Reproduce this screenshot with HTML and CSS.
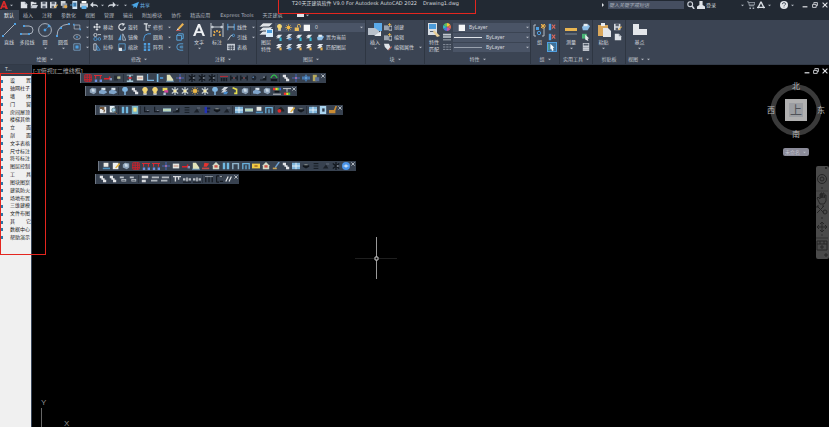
FILE: index.html
```html
<!DOCTYPE html>
<html lang="zh-CN">
<head>
<meta charset="utf-8">
<title>T20天正建筑软件</title>
<link rel="stylesheet" href="styles.css">
</head>
<body>
<svg class="sprite" aria-hidden="true">
  <!-- generic marks -->
  <symbol id="car" viewBox="0 0 4 4"><path d="M0 1h4L2 3z" fill="#b4bac3"/></symbol>
  <symbol id="new" viewBox="0 0 10 10"><path d="M1 1h5l3 3v5H1z" fill="#dfe3e8"/><path d="M6 1v3h3" fill="#8a929e"/></symbol>
  <symbol id="open" viewBox="0 0 10 10"><path d="M1 1h3l1 1h3v2H3L1 9z" fill="#dfe3e8"/><path d="M3 5h7L8 9H1z" fill="#c9ced6"/></symbol>
  <symbol id="save" viewBox="0 0 10 10"><path d="M1 1h8v8H1z" fill="#d3d8df"/><path d="M3 1h4v3H3zM3 6h4v3H3z" fill="#59626f"/></symbol>
  <symbol id="saveas" viewBox="0 0 10 10"><path d="M0 1h8v8H0z" fill="#d3d8df"/><path d="M2 1h4v3H2zM2 6h3v3H2z" fill="#59626f"/><path d="M5 8l4-4 1 1-4 4z" fill="#e9b355"/></symbol>
  <symbol id="phone" viewBox="0 0 10 10"><path d="M3 0h6v10H3z" fill="#d3e6f5"/><path d="M4 2h4v5H4z" fill="#3f79a8"/><path d="M0 5h5M3 3l2 2-2 2" stroke="#54a9e8" fill="none"/></symbol>
  <symbol id="cloud" viewBox="0 0 10 10"><path d="M1 0h6v6H1z" fill="#cfd4da"/><path d="M3 3h6v6H3z" fill="#8f98a4"/><circle cx="7" cy="7" r="2" fill="#e1a94b"/></symbol>
  <symbol id="print" viewBox="0 0 10 10"><path d="M2 0h6v3H2z" fill="#fff"/><path d="M0 3h10v5H0z" fill="#c6ccd4"/><path d="M2 6h6v4H2z" fill="#5eb1ea"/></symbol>
  <symbol id="undo" viewBox="0 0 10 10"><path d="M4 1L0 5l4 3V6h3q2 0 3 2Q10 4 6 4H4z" fill="#d5dae1"/></symbol>
  <symbol id="redo" viewBox="0 0 10 10"><path d="M6 1l4 4-4 3V6H3Q1 6 0 8 0 4 4 4h2z" fill="#d5dae1"/></symbol>
  <symbol id="plane" viewBox="0 0 10 10"><path d="M0 5l10-4-3 8-2-2-2 2V6z" fill="#4ba6e6"/></symbol>
  <symbol id="logo" viewBox="0 0 10 10"><path d="M4 0h2l4 10H7L6 8H3L2 10H0zM5 3L4 6h2z" fill="#d92b2b"/></symbol>
  <symbol id="find" viewBox="0 0 10 10"><circle cx="4" cy="4" r="3" fill="none" stroke="#cfd4dc" stroke-width="1.4"/><path d="M6 6l3 4" stroke="#cfd4dc" stroke-width="2"/></symbol>
  <symbol id="user" viewBox="0 0 10 10"><path d="M3 0h4v5l3 2v3H0V7l3-2z" fill="#dfe3e8"/></symbol>
  <symbol id="cart" viewBox="0 0 10 10"><path d="M0 1h2l1 5h6M2 2h8L9 5H3" fill="none" stroke="#a6adb8"/><path d="M3 8h2v2H3zM7 8h2v2H7z" fill="#a6adb8"/></symbol>
  <symbol id="app" viewBox="0 0 10 10"><path d="M5 1L1 9M5 1l4 8M0 8h10" fill="none" stroke="#d8dde3" stroke-width="1.8"/></symbol>
  <symbol id="help" viewBox="0 0 10 10"><circle cx="5" cy="5" r="5" fill="#e3e6ea"/><path d="M3 4q0-2 2-2t2 2L5 6M5 7v1" fill="none" stroke="#4b5462" stroke-width="1.2"/></symbol>
  <symbol id="min" viewBox="0 0 10 10"><path d="M1 7h8v2H1z" fill="#e1e4e8"/></symbol>
  <symbol id="max" viewBox="0 0 10 10"><path d="M3 3V1h6v5H7M1 4h6v5H1z" fill="none" stroke="#e1e4e8" stroke-width="1.4"/></symbol>
  <symbol id="cls" viewBox="0 0 10 10"><path d="M1 1l8 8M9 1L1 9" stroke="#e1e4e8" stroke-width="1.8"/></symbol>
  <!-- large ribbon icons -->
  <symbol id="line" viewBox="0 0 14 14"><path d="M1 13L13 1" stroke="#a9b1bd"/><path d="M0 12h2v2H0zM12 0h2v2h-2z" fill="#4f9fe0"/></symbol>
  <symbol id="pline" viewBox="0 0 14 14"><path d="M0 11h9q4 0 4-4T9 3H4" fill="none" stroke="#a9b1bd"/><path d="M0 10h2v2H0zM8 10h2v2H8zM3 2h2v2H3z" fill="#4f9fe0"/></symbol>
  <symbol id="circ" viewBox="0 0 14 14"><circle cx="7" cy="7" r="6.4" fill="none" stroke="#a9b1bd"/><path d="M7 7l4-4M6 6h2v2H6zM10 2h2v2h-2z" fill="#4f9fe0" stroke="#4f9fe0" stroke-width=".5"/></symbol>
  <symbol id="arc" viewBox="0 0 14 14"><path d="M1 13Q1 2 13 1" fill="none" stroke="#a9b1bd"/><path d="M0 12h2v2H0zM4 4h2v2H4zM12 0h2v2h-2z" fill="#4f9fe0"/></symbol>
  <symbol id="txt" viewBox="0 0 14 14"><path d="M6 1h2l5 12h-2.4L9.4 10H4.6l-1.200 3H1zM7 4L5.300 8.300h3.400z" fill="#eceff2"/></symbol>
  <symbol id="dimen" viewBox="0 0 14 14"><path d="M1 0v14M13 0v14M1 4h12M1 4l2-1v2zM13 4l-2-1v2z" fill="#c4cad2" stroke="#c4cad2"/><path d="M7 7v2M4 8l1 2M10 8l-1 2M3 12h2M9 12h2" stroke="#edb04b" stroke-width="1.500"/></symbol>
  <symbol id="layers" viewBox="0 0 14 14"><path d="M4 0h10l-4 4H0zM4 4h10l-4 4H0zM4 8h8l-3 4H0z" fill="#e0e4e8" stroke="#3b4453" stroke-width=".6"/><path d="M7 6h7v8H7z" fill="#d7ebfa"/><path d="M8 7h5v3H8z" fill="#4c9ddc"/></symbol>
  <symbol id="insert" viewBox="0 0 14 14"><path d="M6 0h8v8H6z" fill="#5aa9e8"/><path d="M0 5h7l4 3v4H0z" fill="#b9c1cb"/><path d="M6 13l7-5v5z" fill="#e5e8ec"/></symbol>
  <symbol id="match" viewBox="0 0 14 14"><path d="M1 0h9v12H1z" fill="#d9dee4"/><path d="M2 1h7v5H2z" fill="#4b9bdb"/><path d="M3 8h5v1H3z" fill="#5a6473"/><path d="M7 7l6 6-3 1-4-5z" fill="#e9cf98"/></symbol>
  <symbol id="group" viewBox="0 0 14 14"><path d="M3 2H1v11h2M11 5v8h-2" fill="none" stroke="#b3bac4"/><path d="M3 4h3v3H3z" fill="#4f9fe0"/><circle cx="6" cy="10" r="1.700" fill="none" stroke="#4f9fe0"/><path d="M10 1v5M8 3h5M8 1l4 4M12 1L8 5" stroke="#edb04b" stroke-width="1"/></symbol>
  <symbol id="measure" viewBox="0 0 14 14"><path d="M1 5h12v3H1z" fill="#e8b552"/><path d="M1 11h12" stroke="#7d8693"/></symbol>
  <symbol id="paste" viewBox="0 0 14 14"><path d="M1 2h10v11H1z" fill="#d9a75c"/><path d="M4 0h4v3H4z" fill="#e8ebee"/><path d="M6 5h5l3 3v6H6z" fill="#e3e6ea"/></symbol>
  <symbol id="base" viewBox="0 0 14 14"><path d="M0 1h6v5h8v6H0z" fill="#e3e6ea"/></symbol>
  <!-- small ribbon icons -->
  <symbol id="rect" viewBox="0 0 10 10"><path d="M1.500 2.500h7v5h-7z" fill="none" stroke="#a9b1bd"/><path d="M0 1h2v2H0zM8 7h2v2H8z" fill="#4f9fe0"/></symbol>
  <symbol id="elli" viewBox="0 0 10 10"><ellipse cx="5" cy="5" rx="4.300" ry="3" fill="none" stroke="#a9b1bd"/><path d="M4 4h2v2H4z" fill="#4f9fe0"/></symbol>
  <symbol id="hatch" viewBox="0 0 10 10"><path d="M1 1h8v8H1z" fill="none" stroke="#7fa8cc"/><path d="M3 3h4v4H3z" fill="#4f9fe0"/></symbol>
  <symbol id="move" viewBox="0 0 10 10"><path d="M5 0l2 2.500H3zM5 10L3 7.500h4zM0 5l2.500-2v4zM10 5L7.500 3v4zM4.400 2h1.200v6H4.400zM2 4.400h6v1.200H2z" fill="#dde1e6"/></symbol>
  <symbol id="rot" viewBox="0 0 10 10"><path d="M6 1a4 4 0 1 0 3 4" fill="none" stroke="#dde1e6" stroke-width="1.400"/><path d="M5 0l4 1-3 3z" fill="#dde1e6"/></symbol>
  <symbol id="trim" viewBox="0 0 10 10"><path d="M1 1h5M4 1v8h3" fill="none" stroke="#dde1e6" stroke-width="1.500"/><path d="M6 3h4M6 5h3" stroke="#dde1e6"/></symbol>
  <symbol id="pen" viewBox="0 0 10 10"><path d="M2 7l6-7 2 2-6 6z" fill="#eab352"/><path d="M0 9h6v1H0z" fill="#d95f54"/><path d="M2 7l2 1-3 1z" fill="#fff"/></symbol>
  <symbol id="copy" viewBox="0 0 10 10"><circle cx="3" cy="2.500" r="2" fill="none" stroke="#dde1e6"/><circle cx="3" cy="7.500" r="2" fill="none" stroke="#4f9fe0"/><circle cx="8" cy="7.500" r="1.700" fill="none" stroke="#4f9fe0"/><path d="M6 2h4" stroke="#dde1e6"/></symbol>
  <symbol id="mirror" viewBox="0 0 10 10"><path d="M4 1v8H0z" fill="#4f9fe0"/><path d="M6 1v8h4z" fill="none" stroke="#b9c5d2"/></symbol>
  <symbol id="fillet" viewBox="0 0 10 10"><path d="M1 10V7q0-5 5-6h4" fill="none" stroke="#4f9fe0" stroke-width="1.200"/></symbol>
  <symbol id="cube" viewBox="0 0 10 10"><path d="M1 3h6v6H1zM3 1h6v6H7M1 3l2-2" fill="none" stroke="#5aa6dd" stroke-width="1.200"/></symbol>
  <symbol id="stretch" viewBox="0 0 10 10"><path d="M1 1h3v8H1z" fill="none" stroke="#dde1e6"/><path d="M5 3l4 6H5z" fill="none" stroke="#4f9fe0"/></symbol>
  <symbol id="scale" viewBox="0 0 10 10"><path d="M1 1h8v8H1z" fill="none" stroke="#5aa6dd"/><path d="M1 6h4v4H1z" fill="#dde1e6"/></symbol>
  <symbol id="array" viewBox="0 0 10 10"><path d="M1 0h3v3H1zM6 0h3v3H6zM1 4h3v2H1zM6 4h3v2H6zM1 7h3v3H1zM6 7h3v3H6z" fill="#4f9fe0"/></symbol>
  <symbol id="offset" viewBox="0 0 10 10"><path d="M9 1H5a4 4 0 0 0 0 8h4M9 4H6a1 1 0 0 0 0 2h3" fill="none" stroke="#5aa6dd" stroke-width="1.100"/></symbol>
  <symbol id="lin" viewBox="0 0 10 10"><path d="M1 1v8M9 1v8" stroke="#4f9fe0" stroke-width="1.300"/><path d="M1 5h8" stroke="#dde1e6"/></symbol>
  <symbol id="lead" viewBox="0 0 10 10"><path d="M1 9l4-6h2" fill="none" stroke="#dde1e6"/><circle cx="8" cy="3" r="1.500" fill="none" stroke="#4f9fe0"/></symbol>
  <symbol id="table" viewBox="0 0 10 10"><path d="M0 1h10v8H0z" fill="#c4cad2"/><path d="M1 4h8M1 6.500h8M4 3v6M7 3v6" stroke="#3b4453"/></symbol>
  <symbol id="bulb" viewBox="0 0 10 10"><path d="M5 0a3.300 3.300 0 0 1 2 6v3H3V6a3.300 3.300 0 0 1 2-6z" fill="#f3d673"/><path d="M3 8h4v2H3z" fill="#b8bdc4"/></symbol>
  <symbol id="sun" viewBox="0 0 10 10"><circle cx="5" cy="5" r="2.600" fill="#efb947"/><path d="M5 0v10M0 5h10M1.500 1.500l7 7M8.500 1.500l-7 7" stroke="#efb947" stroke-width=".8"/></symbol>
  <symbol id="lock" viewBox="0 0 10 10"><path d="M1 5h6v5H1z" fill="#eec05b"/><path d="M5 5V2q0-1.500 2-1.500t2 2V5" fill="none" stroke="#eec05b" stroke-width="1.300"/></symbol>
  <symbol id="sq" viewBox="0 0 10 10"><path d="M1 1h9v9H1z" fill="#f6f7f8"/></symbol>
  <symbol id="lay1" viewBox="0 0 10 10"><path d="M3 1h6L6 4H0zM3 4h4L5 6H0z" fill="#e1e5ea"/><path d="M5 5h3v5H5z" fill="#35b9d8"/></symbol>
  <symbol id="lay2" viewBox="0 0 10 10"><path d="M4 0h5L5 4H0zM3 4h5L5 7H0z" fill="#cdd4dc"/><path d="M4 6h5L7 9H3z" fill="#4b8fd0"/></symbol>
  <symbol id="lay3" viewBox="0 0 10 10"><path d="M3 0h6L6 3H0zM3 3h5L5 6H0z" fill="#e1e5ea"/><path d="M5 5h3v4H5z" fill="#e9b24d"/></symbol>
  <symbol id="lay4" viewBox="0 0 10 10"><path d="M3 2h5l2 2-3 5H1L0 5z" fill="#8cbde6"/><path d="M2 1h5v3H2z" fill="#e7edf2"/></symbol>
  <symbol id="blk" viewBox="0 0 10 10"><path d="M0 3h5v6H0z" fill="#9aa3af"/><path d="M6 4h4v5H6z" fill="none" stroke="#dde1e6"/><path d="M7 0v4M5 2h4" stroke="#efb947"/></symbol>
  <symbol id="attr" viewBox="0 0 10 10"><path d="M0 1h6l2 4-3 4-4-4z" fill="#dfe3e8"/><path d="M5 9l4-5 1 1-4 4z" fill="#d9705d"/></symbol>
  <symbol id="wheel" viewBox="0 0 10 10"><path d="M5 5V0a5 5 0 0 1 4.300 2.500z" fill="#f0c23e"/><path d="M5 5l4.300-2.500a5 5 0 0 1 0 5z" fill="#e06b4b"/><path d="M5 5l4.300 2.500A5 5 0 0 1 5 10z" fill="#c755a8"/><path d="M5 5v5A5 5 0 0 1 .7 7.500z" fill="#4f74dd"/><path d="M5 5L.7 7.500a5 5 0 0 1 0-5z" fill="#36b7c4"/><path d="M5 5L.7 2.500A5 5 0 0 1 5 0z" fill="#5fc25f"/></symbol>
  <symbol id="lines" viewBox="0 0 10 10"><path d="M0 1h10v2H0zM0 4h10v2H0zM0 8h10v1H0z" fill="#c4cad2"/></symbol>
  <symbol id="ltype" viewBox="0 0 10 10"><path d="M0 2h10M0 5h10M0 8h10" stroke="#9aa2ae" stroke-dasharray="3 1"/></symbol>
  <symbol id="g1" viewBox="0 0 10 10"><path d="M1 1h3v8H1z" fill="#4f9fe0"/><path d="M5 2l4 5M9 2L5 7" stroke="#d8665c" stroke-width="1.300"/></symbol>
  <symbol id="g2" viewBox="0 0 10 10"><path d="M0 0h10v10H0z" fill="#3f7098"/><path d="M3 1l5 5H6l1 3-2 1-1-3-1 1z" fill="#fff"/><path d="M1 1v8" stroke="#55c488"/></symbol>
  <symbol id="calc" viewBox="0 0 10 10"><path d="M1 0h8v10H1z" fill="#c9ced6"/><path d="M2 1h6v2H2zM2 5h1v1H2zM4.500 5h1v1h-1zM7 5h1v1H7zM2 8h1v1H2zM4.500 8h1v1h-1zM7 8h1v1H7z" fill="#505a68"/></symbol>
  <symbol id="pick" viewBox="0 0 10 10"><path d="M0 1h6v6H0z" fill="#48b474"/><path d="M4 2l5 5H7l1 3-2-1-2-1z" fill="#e7eaed"/></symbol>
  <!-- floating toolbar icons -->
  <symbol id="grid" viewBox="0 0 10 10"><path d="M1 1h8v8H1zM4 0v10M7 0v10M0 4h10M0 7h10" fill="none" stroke="#c9222c" stroke-width="1.200"/></symbol>
  <symbol id="axis" viewBox="0 0 10 10"><path d="M0 2h10M2 2v4M8 2v4" stroke="#d92b35" stroke-width="1.300"/><path d="M1 7h3v3H1zM7 7h3v3H7z" fill="#6c8fe0"/></symbol>
  <symbol id="red" viewBox="0 0 10 10"><path d="M0 6h7V3" fill="none" stroke="#e01f28" stroke-width="1.800"/><path d="M7 5h3v3H7z" fill="#8292b8"/></symbol>
  <symbol id="blob" viewBox="0 0 10 10"><path d="M1 3l3-2 5 1v5L6 9 1 7z" fill="#8fa5bc"/><path d="M3 2l4 1v3H4z" fill="#c9d8e5"/></symbol>
  <symbol id="blob2" viewBox="0 0 10 10"><path d="M3 1h5v3H3z" fill="#dbe4ec"/><path d="M0 5l4-2 5 2 1 2-4 2-6-1z" fill="#7fa4ca"/></symbol>
  <symbol id="dark" viewBox="0 0 10 10"><path d="M1 8l4-5 3 5z" fill="#1b2129"/><path d="M5 2h4v1H5z" fill="#707986"/></symbol>
  <symbol id="hook" viewBox="0 0 10 10"><path d="M2 1v6h6" fill="none" stroke="#161b22" stroke-width="1.500"/><path d="M5 5h2v1H5z" fill="#88919c"/></symbol>
  <symbol id="box" viewBox="0 0 10 10"><path d="M0 7h3l5-5v6H0z" fill="#141a20"/><path d="M4 3h2v2H4z" fill="#79828e"/></symbol>
  <symbol id="anvil" viewBox="0 0 10 10"><path d="M1 4h8v2L5 8 1 6z" fill="#12171d"/><path d="M3 3h4v1H3z" fill="#a3a79f"/></symbol>
  <symbol id="drop" viewBox="0 0 10 10"><circle cx="5" cy="5" r="3" fill="#1d2530"/><path d="M3 3h2v2H3z" fill="#5477a0"/></symbol>
  <symbol id="key" viewBox="0 0 10 10"><path d="M0 2h5v6H0z" fill="#242b34"/><path d="M4 3h4v3H4z" fill="#b9bd8f"/></symbol>
  <symbol id="beam" viewBox="0 0 10 10"><path d="M1 1h8v1H1zM1 8h8v2H1zM4 2h2v6H4z" fill="#a6c9d8"/><path d="M3 5h4" stroke="#d9222c" stroke-width="2"/></symbol>
  <symbol id="win" viewBox="0 0 10 10"><path d="M1 2h8v6H1z" fill="#e4e6e0"/><path d="M2 5h6" stroke="#bd6d59"/></symbol>
  <symbol id="corner" viewBox="0 0 10 10"><path d="M2 0v8h8" fill="none" stroke="#79b5df" stroke-width="1.400"/></symbol>
  <symbol id="flag" viewBox="0 0 10 10"><path d="M2 0v10" stroke="#7bc3eb" stroke-width="2"/><path d="M5 5h4" stroke="#4f9fe0" stroke-width="2"/></symbol>
  <symbol id="stair" viewBox="0 0 10 10"><path d="M1 1h4l4 6v2H1z" fill="#e2e3b9"/><path d="M0 9h10" stroke="#6aa4d0"/></symbol>
  <symbol id="cross" viewBox="0 0 10 10"><path d="M5 0v10M0 5h10" stroke="#4665b8" stroke-width="1.300"/><path d="M4 4h2v2H4z" fill="#e07aa0"/></symbol>
  <symbol id="star" viewBox="0 0 10 10"><path d="M5 0v10M1 2l8 6M9 2L1 8" stroke="#10151b" stroke-width="1.500"/><path d="M6 4h2v2H6z" fill="#858e99"/></symbol>
  <symbol id="snow" viewBox="0 0 10 10"><path d="M5 0v10M1 2l8 6M9 2L1 8" stroke="#c3cdd2" stroke-width="1.500"/><circle cx="5" cy="5" r="2" fill="#f4e9a7"/></symbol>
  <symbol id="dots" viewBox="0 0 10 10"><path d="M0 3h10" stroke="#d9222c"/><path d="M1 5h2v4H1zM4 5h2v4H4zM7 5h2v4H7z" fill="#151b23"/></symbol>
  <symbol id="arr" viewBox="0 0 10 10"><path d="M1 5h8M1 2v6M9 2v6" stroke="#141a22" stroke-width="1.600"/><path d="M4 4h2v2H4z" fill="#94585b"/></symbol>
  <symbol id="green" viewBox="0 0 10 10"><path d="M1 5q4-8 8 0" fill="none" stroke="#2fc347" stroke-width="1.500"/><path d="M1 6h8v3H1z" fill="#11171d"/></symbol>
  <symbol id="steps" viewBox="0 0 10 10"><path d="M1 1h4v3H1zM3 4h4v2H3zM5 6h4v3H5z" fill="#e2e4e7"/></symbol>
  <symbol id="steps2" viewBox="0 0 10 10"><path d="M1 2h5v2H1zM3 5h6v3H3z" fill="#b9bfc6"/><path d="M4 6h4v1H4z" fill="#39424f"/></symbol>
  <symbol id="pan" viewBox="0 0 10 10"><path d="M5 0l2 3h3v4H7l-2 3-2-3H0V3h3z" fill="#4477ad"/><path d="M4 4h2v2H4z" fill="#7fb0dc"/></symbol>
  <symbol id="olive" viewBox="0 0 10 10"><path d="M1 1h5v8H1z" fill="#b7a95b"/><path d="M4 4h5v5H4z" fill="#596e93"/></symbol>
  <symbol id="mag" viewBox="0 0 10 10"><path d="M2 1h6v4H2z" fill="#ecd95a"/><path d="M4 4h5v3H4z" fill="#cf3f9a"/><path d="M3 7h3v3H3z" fill="#b7c6d4"/></symbol>
  <symbol id="hookY" viewBox="0 0 10 10"><path d="M2 1l5 2v5H4" fill="none" stroke="#e6de4c" stroke-width="2"/></symbol>
  <symbol id="pin" viewBox="0 0 10 10"><path d="M5 0a3 3 0 0 1 1 6v4H4V6a3 3 0 0 1 1-6z" fill="#7fb6e3"/></symbol>
  <symbol id="bars" viewBox="0 0 10 10"><path d="M1 1h3v8H1zM6 1h3v8H6z" fill="#71b9e2"/></symbol>
  <symbol id="pane" viewBox="0 0 10 10"><path d="M0 1h10v8H0z" fill="#80b6dc"/><path d="M5 1v8M0 5h10" stroke="#f4f7f8"/></symbol>
  <symbol id="green2" viewBox="0 0 10 10"><path d="M1 0h8v10H1z" fill="#77b5cb"/><path d="M3 2h4v5H3z" fill="#efe68b"/></symbol>
  <symbol id="cell" viewBox="0 0 10 10"><path d="M1 0h8v10H1z" fill="#a9d3ee"/><path d="M4 3h3v4H4z" fill="#2c3a49"/></symbol>
  <symbol id="rainb" viewBox="0 0 10 10"><path d="M0 1h3v3H0z" fill="#e33"/><path d="M3 1h3v3H3z" fill="#eadc2a"/><path d="M6 1h2v3H6z" fill="#3bc450"/><path d="M8 1h2v3H8z" fill="#3f67e0"/><path d="M2 5h6v2H2z" fill="#12171d"/><path d="M0 9h10" stroke="#e8e8e8"/></symbol>
  <symbol id="rainc" viewBox="0 0 10 10"><path d="M1 7h3v3H1z" fill="#e33"/><path d="M4 7h3v3H4z" fill="#eadc2a"/><path d="M7 7h2v3H7z" fill="#3bc450"/><path d="M0 2h10M5 2v4" stroke="#e8e8e8"/></symbol>
  <symbol id="note" viewBox="0 0 10 10"><path d="M1 1h8v8H1z" fill="#e4e7e8"/><path d="M2 2h4v1H2zM4 4l3 1-1 3" fill="none" stroke="#73573c" stroke-width="1.400"/></symbol>
  <symbol id="edit" viewBox="0 0 10 10"><path d="M1 1h7v8H1z" fill="#eef0f1"/><path d="M4 7l5-6 1 2-5 5z" fill="#e3b03f"/></symbol>
  <symbol id="look" viewBox="0 0 10 10"><path d="M1 0h6v8H1z" fill="#e4eef4"/><circle cx="6" cy="5" r="2.500" fill="#9dc9e6" stroke="#577"/><path d="M7 7l3 3" stroke="#88603f"/></symbol>
  <symbol id="blue" viewBox="0 0 10 10"><path d="M2 1h3v8H2z" fill="#2433b8"/><path d="M5 2h4v2H5zM5 6h3v2H5z" fill="#131b48"/></symbol>
  <symbol id="bar" viewBox="0 0 10 10"><path d="M0 3h10v4H0z" fill="#a7d4db"/><path d="M0 5h10" stroke="#d7d78b"/></symbol>
  <symbol id="lists" viewBox="0 0 10 10"><path d="M2 2h6M2 5h6M2 8h6" stroke="#151b22" stroke-width="1.200"/></symbol>
  <symbol id="tray" viewBox="0 0 10 10"><path d="M2 1h6v5H2z" fill="#e9e9e4"/><path d="M1 7h9v2H1z" fill="#4e91bd"/></symbol>
  <symbol id="redcar" viewBox="0 0 10 10"><path d="M1 4l4-3 4 4v2H1z" fill="#222"/><circle cx="3" cy="6" r="2.400" fill="#e12a2a"/></symbol>
  <symbol id="gold" viewBox="0 0 10 10"><path d="M0 5h6L8 0h2L8 6v3H0z" fill="#c98b32"/></symbol>
  <symbol id="redp" viewBox="0 0 10 10"><path d="M3 1l6 1-3 4H2z" fill="#e8322e"/><path d="M0 7h9v2H0z" fill="#c34a48"/></symbol>
  <symbol id="door" viewBox="0 0 10 10"><path d="M1 9V2h8v7M5 4v5" fill="none" stroke="#69b1dc" stroke-width="1.600"/></symbol>
  <symbol id="gate" viewBox="0 0 10 10"><path d="M1 9V2h7v7" fill="none" stroke="#8fb3ca" stroke-width="1.800"/></symbol>
  <symbol id="yel" viewBox="0 0 10 10"><path d="M0 2h10v6H0z" fill="#f0ca44"/><path d="M3 4h4v2H3z" fill="#a76d27"/></symbol>
  <symbol id="house" viewBox="0 0 10 10"><path d="M5 0l4 4v5H1V4z" fill="#d5dbc7"/><path d="M3 4h4v3H3z" fill="#ce5449"/></symbol>
  <symbol id="brush" viewBox="0 0 10 10"><path d="M9 0L4 7" stroke="#6d9fd0" stroke-width="1.800"/><path d="M1 7h5v2H1z" fill="#c8a256"/></symbol>
  <symbol id="qm" viewBox="0 0 10 10"><circle cx="5" cy="5" r="5" fill="#4a94ea"/><path d="M2 5h6M5 3v4" stroke="#dcebfb" stroke-width="1.500"/></symbol>
  <symbol id="alg" viewBox="0 0 10 10"><path d="M1 1h8v3H1zM1 6h5v3H1z" fill="#d5d8dc"/></symbol>
  <symbol id="alg2" viewBox="0 0 10 10"><path d="M1 2h9v2H1zM0 6h8v2H0z" fill="#aeb4bb"/></symbol>
  <symbol id="tee" viewBox="0 0 10 10"><path d="M0 2h10M3 2v6M7 2v4" stroke="#d5d8dc" stroke-width="1.700"/></symbol>
  <symbol id="spr" viewBox="0 0 10 10"><path d="M0 4h3v3H0zM7 4h3v3H7zM4 3h2v5H4z" fill="#b4b9c0"/><path d="M0 9h10" stroke="#11161c"/></symbol>
  <symbol id="tri" viewBox="0 0 10 10"><path d="M1 1v8M5 1v8M9 1v8" stroke="#11161c" stroke-width="1.400"/><path d="M0 2h10" stroke="#aeb5be"/></symbol>
  <symbol id="brk" viewBox="0 0 10 10"><path d="M2 1v8M2 1h3M2 9h3M6 2h4M6 8h4" stroke="#14191f" stroke-width="1.500"/><path d="M6 2h3" stroke="#cdd1d7"/></symbol>
  <symbol id="sl" viewBox="0 0 10 10"><path d="M1 8l3-6M5 8l3-6" stroke="#e6e8ea" stroke-width="1.500"/></symbol>
</svg>

<div class="app">
  <header class="titlebar">
    <div class="quick">
      <button class="logo"><svg><use href="#logo"/></svg></button><svg class="caret"><use href="#car"/></svg>
      <span class="quick-tools"><button><svg><use href="#new"/></svg></button><button><svg><use href="#open"/></svg></button><button><svg><use href="#save"/></svg></button><button><svg><use href="#saveas"/></svg></button><button><svg><use href="#cloud"/></svg></button><button><svg><use href="#phone"/></svg></button><button><svg><use href="#print"/></svg></button><button><svg><use href="#undo"/></svg></button></span>
      <svg class="caret"><use href="#car"/></svg><button><svg><use href="#redo"/></svg></button><svg class="caret"><use href="#car"/></svg><svg class="caret menu"><use href="#car"/></svg>
      <button class="share"><svg><use href="#plane"/></svg>共享</button>
    </div>
    <h1 class="title"><span>T20天正建筑软件 V9.0 For Autodesk AutoCAD 2022</span><span>Drawing1.dwg</span></h1>
    <div class="account">
      <i class="play"></i><input class="search" type="text" placeholder="键入关键字或短语" aria-label="搜索">
      <button><svg><use href="#find"/></svg></button><button class="login"><svg><use href="#user"/></svg>登录</button>
      <span class="spring"></span>
      <svg class="caret"><use href="#car"/></svg><button><svg><use href="#cart"/></svg></button><button class="apps"><svg><use href="#app"/></svg></button><svg class="caret"><use href="#car"/></svg><button class="help"><svg><use href="#help"/></svg></button><svg class="caret"><use href="#car"/></svg>
      <span class="window"><button><svg><use href="#min"/></svg></button><button><svg><use href="#max"/></svg></button><button><svg><use href="#cls"/></svg></button></span>
    </div>
  </header>

  <nav class="tabs">
    <a class="on" href="#">默认</a><a href="#">插入</a><a href="#">注释</a><a href="#">参数化</a><a href="#">视图</a><a href="#">管理</a><a href="#">输出</a><a href="#">附加模块</a><a href="#">协作</a><a href="#">精选应用</a><a class="latin" href="#">Express Tools</a><a href="#">天正建筑</a><button class="collapse"><i></i><svg class="caret"><use href="#car"/></svg></button>
  </nav>

  <main class="ribbon">
    <section class="panel p-draw">
      <div class="body">
        <button class="big"><svg><use href="#line"/></svg>直线</button><button class="big"><svg><use href="#pline"/></svg>多段线</button><button class="big"><svg><use href="#circ"/></svg>圆<svg class="caret"><use href="#car"/></svg></button><button class="big"><svg><use href="#arc"/></svg>圆弧<svg class="caret"><use href="#car"/></svg></button>
        <div class="col"><button><svg><use href="#rect"/></svg><svg class="caret"><use href="#car"/></svg></button><button><svg><use href="#elli"/></svg><svg class="caret"><use href="#car"/></svg></button><button><svg><use href="#hatch"/></svg><svg class="caret"><use href="#car"/></svg></button></div>
      </div>
      <h2>绘图<svg class="caret"><use href="#car"/></svg></h2>
    </section>
    <section class="panel p-modify">
      <div class="body">
        <div class="col"><button><svg><use href="#move"/></svg>移动</button><button><svg><use href="#copy"/></svg>复制</button><button><svg><use href="#stretch"/></svg>拉伸</button></div>
        <div class="col"><button><svg><use href="#rot"/></svg>旋转</button><button><svg><use href="#mirror"/></svg>镜像</button><button><svg><use href="#scale"/></svg>缩放</button></div>
        <div class="col"><button><svg><use href="#trim"/></svg>修剪<svg class="caret"><use href="#car"/></svg></button><button><svg><use href="#fillet"/></svg>圆角<svg class="caret"><use href="#car"/></svg></button><button><svg><use href="#array"/></svg>阵列<svg class="caret"><use href="#car"/></svg></button></div>
        <div class="col"><button><svg><use href="#pen"/></svg></button><button><svg><use href="#cube"/></svg></button><button><svg><use href="#offset"/></svg></button></div>
      </div>
      <h2>修改<svg class="caret"><use href="#car"/></svg></h2>
    </section>
    <section class="panel p-note">
      <div class="body">
        <button class="big"><svg><use href="#txt"/></svg>文字<svg class="caret"><use href="#car"/></svg></button><button class="big"><svg><use href="#dimen"/></svg>标注</button>
        <div class="col"><button><svg><use href="#lin"/></svg>线性<svg class="caret"><use href="#car"/></svg></button><button><svg><use href="#lead"/></svg>引线<svg class="caret"><use href="#car"/></svg></button><button><svg><use href="#table"/></svg>表格</button></div>
      </div>
      <h2>注释<svg class="caret"><use href="#car"/></svg></h2>
    </section>
    <section class="panel p-layer">
      <div class="body">
        <button class="big"><svg><use href="#layers"/></svg>图层<br>特性</button>
        <div class="rows">
          <button class="combo"><svg><use href="#bulb"/></svg><svg><use href="#sun"/></svg><svg><use href="#lock"/></svg><svg><use href="#sq"/></svg><span>0</span><svg class="caret"><use href="#car"/></svg></button>
          <div class="strip"><svg><use href="#lay1"/></svg><svg><use href="#lay2"/></svg><svg><use href="#lay1"/></svg><svg><use href="#lay1"/></svg><button><svg><use href="#lay4"/></svg>置为当前</button></div>
          <div class="strip"><svg><use href="#lay3"/></svg><svg><use href="#lay2"/></svg><svg><use href="#lay3"/></svg><svg><use href="#lay3"/></svg><button><svg><use href="#lay3"/></svg>匹配图层</button></div>
        </div>
      </div>
      <h2>图层<svg class="caret"><use href="#car"/></svg></h2>
    </section>
    <section class="panel p-block">
      <div class="body">
        <button class="big"><svg><use href="#insert"/></svg>插入<svg class="caret"><use href="#car"/></svg></button>
        <div class="col"><button><svg><use href="#blk"/></svg>创建</button><button><svg><use href="#blk"/></svg>编辑</button><button><svg><use href="#attr"/></svg>编辑属性<svg class="caret"><use href="#car"/></svg></button></div>
      </div>
      <h2>块<svg class="caret"><use href="#car"/></svg></h2>
    </section>
    <section class="panel p-prop">
      <div class="body">
        <button class="big"><svg><use href="#match"/></svg>特性<br>匹配</button>
        <div class="col icons"><svg><use href="#wheel"/></svg><svg><use href="#lines"/></svg><svg><use href="#ltype"/></svg></div>
        <div class="rows">
          <button class="combo color"><svg><use href="#sq"/></svg><span>ByLayer</span><svg class="caret"><use href="#car"/></svg></button>
          <button class="combo"><i class="stroke"></i><span>ByLayer</span><svg class="caret"><use href="#car"/></svg></button>
          <button class="combo"><i class="stroke thin"></i><span>ByLayer</span><svg class="caret"><use href="#car"/></svg></button>
        </div>
      </div>
      <h2>特性<svg class="caret"><use href="#car"/></svg></h2>
    </section>
    <section class="panel p-group">
      <div class="body">
        <button class="big"><svg><use href="#group"/></svg>组</button>
        <div class="col icons"><svg><use href="#g1"/></svg><svg><use href="#g1"/></svg><svg class="picked"><use href="#g2"/></svg></div>
      </div>
      <h2>组<svg class="caret"><use href="#car"/></svg></h2>
    </section>
    <section class="panel p-util">
      <div class="body">
        <button class="big"><svg><use href="#measure"/></svg>测量<svg class="caret"><use href="#car"/></svg></button>
        <div class="col icons"><svg><use href="#lay4"/></svg><svg><use href="#pick"/></svg><svg><use href="#calc"/></svg></div>
      </div>
      <h2>实用工具<svg class="caret"><use href="#car"/></svg></h2>
    </section>
    <section class="panel p-clip">
      <div class="body">
        <button class="big"><svg><use href="#paste"/></svg>粘贴<svg class="caret"><use href="#car"/></svg></button>
        <div class="col icons"><svg><use href="#saveas"/></svg><svg><use href="#new"/></svg></div>
      </div>
      <h2>剪贴板</h2>
    </section>
    <section class="panel p-view">
      <div class="body"><button class="big"><svg><use href="#base"/></svg>基点<svg class="caret"><use href="#car"/></svg></button></div>
      <h2>视图<svg class="caret"><use href="#car"/></svg><svg class="caret"><use href="#car"/></svg></h2>
    </section>
  </main>

  <div class="work">
    <aside class="side">
      <div class="side-head">T...</div>
      <ul>
        <li><b>设</b><b>置</b></li><li>轴网柱子</li><li><b>墙</b><b>体</b></li><li><b>门</b><b>窗</b></li><li>房间屋顶</li><li>楼梯其他</li><li><b>立</b><b>面</b></li><li><b>剖</b><b>面</b></li><li>文字表格</li><li>尺寸标注</li><li>符号标注</li><li>图层控制</li><li><b>工</b><b>具</b></li><li>图块图案</li><li>建筑防火</li><li>场地布置</li><li>三维建模</li><li>文件布图</li><li><b>其</b><b>它</b></li><li>数据中心</li><li>帮助演示</li>
      </ul>
    </aside>
    <div class="canvas">
      <div class="canvas-head"><span>[-][俯视][二维线框]</span><span class="doc"><svg><use href="#min"/></svg><svg><use href="#max"/></svg><svg><use href="#cls"/></svg></span></div>

      <div class="bar b1"><svg><use href="#grid"/></svg><svg><use href="#axis"/></svg><svg><use href="#red"/></svg><svg><use href="#key"/></svg><i></i><svg><use href="#beam"/></svg><svg><use href="#win"/></svg><svg><use href="#corner"/></svg><svg><use href="#flag"/></svg><svg><use href="#stair"/></svg><svg><use href="#cross"/></svg><i></i><svg><use href="#star"/></svg><svg><use href="#star"/></svg><svg><use href="#star"/></svg><i></i><svg><use href="#dots"/></svg><svg><use href="#arr"/></svg><svg><use href="#arr"/></svg><svg><use href="#drop"/></svg><svg><use href="#box"/></svg><svg><use href="#green"/></svg><i></i><svg><use href="#steps"/></svg><svg><use href="#cross"/></svg><svg><use href="#pan"/></svg><svg><use href="#olive"/></svg><button aria-label="关闭"><svg><use href="#cls"/></svg></button></div>

      <div class="bar b2"><svg><use href="#blob"/></svg><svg><use href="#blob2"/></svg><svg><use href="#blob2"/></svg><i></i><svg><use href="#pin"/></svg><svg><use href="#steps"/></svg><svg><use href="#bulb"/></svg><svg><use href="#bulb"/></svg><svg><use href="#mag"/></svg><svg><use href="#snow"/></svg><svg><use href="#snow"/></svg><svg><use href="#sun"/></svg><svg><use href="#snow"/></svg><svg><use href="#pin"/></svg><svg><use href="#lay2"/></svg><svg><use href="#hookY"/></svg><svg><use href="#blob"/></svg><i></i><svg><use href="#blob2"/></svg><svg><use href="#blob"/></svg><svg><use href="#rainb"/></svg><svg><use href="#rainc"/></svg><button aria-label="关闭"><svg><use href="#cls"/></svg></button></div>

      <div class="bar b3"><svg><use href="#note"/></svg><svg><use href="#look"/></svg><i></i><svg><use href="#bars"/></svg><svg><use href="#green2"/></svg><i></i><svg><use href="#hook"/></svg><svg><use href="#hook"/></svg><svg><use href="#bar"/></svg><svg><use href="#box"/></svg><svg><use href="#lists"/></svg><svg><use href="#dark"/></svg><svg><use href="#blue"/></svg><svg><use href="#anvil"/></svg><svg><use href="#dark"/></svg><i></i><svg><use href="#pane"/></svg><svg><use href="#bar"/></svg><svg><use href="#tray"/></svg><svg><use href="#door"/></svg><i></i><svg><use href="#redcar"/></svg><svg><use href="#edit"/></svg><svg><use href="#anvil"/></svg><i></i><svg><use href="#pane"/></svg><svg><use href="#cell"/></svg><svg><use href="#gold"/></svg><button aria-label="关闭"><svg><use href="#cls"/></svg></button></div>

      <div class="bar b4"><svg><use href="#tray"/></svg><svg><use href="#edit"/></svg><svg><use href="#blob"/></svg><svg><use href="#grid"/></svg><svg><use href="#axis"/></svg><svg><use href="#axis"/></svg><svg><use href="#cross"/></svg><svg><use href="#win"/></svg><svg><use href="#red"/></svg><svg><use href="#stair"/></svg><svg><use href="#redp"/></svg><svg><use href="#house"/></svg><svg><use href="#bars"/></svg><svg><use href="#gate"/></svg><svg><use href="#door"/></svg><svg><use href="#yel"/></svg><svg><use href="#house"/></svg><svg><use href="#brush"/></svg><svg><use href="#steps"/></svg><svg><use href="#pane"/></svg><svg><use href="#anvil"/></svg><svg><use href="#lists"/></svg><svg><use href="#dark"/></svg><svg><use href="#star"/></svg><svg><use href="#qm"/></svg><button aria-label="关闭"><svg><use href="#cls"/></svg></button></div>

      <div class="bar b5"><svg><use href="#steps"/></svg><svg><use href="#steps"/></svg><svg><use href="#steps2"/></svg><svg><use href="#steps2"/></svg><i></i><svg><use href="#alg"/></svg><svg><use href="#alg2"/></svg><svg><use href="#alg2"/></svg><i></i><svg><use href="#tee"/></svg><svg><use href="#spr"/></svg><svg><use href="#spr"/></svg><i></i><svg><use href="#tri"/></svg><svg><use href="#brk"/></svg><svg><use href="#sl"/></svg><button aria-label="关闭"><svg><use href="#cls"/></svg></button></div>

      <div class="compass">
        <svg viewBox="0 0 52 52" aria-hidden="true"><circle cx="26" cy="26" r="23" fill="none" stroke="#3a3a3a" stroke-width="5"/></svg>
        <span class="n">北</span><span class="w">西</span><button class="top">上</button><span class="e">东</span><span class="s">南</span>
      </div>
      <button class="ucs-name">未命名<svg class="caret"><use href="#car"/></svg></button>

      <div class="navbar">
        <svg viewBox="0 0 12 92" fill="none" stroke="#262626" aria-hidden="true">
          <path d="M9 1l2 2M11 1L9 3M9 88h2v2H9z"/>
          <circle cx="6" cy="13" r="4.500"/><circle cx="6" cy="13" r="2"/><path d="M5 22h2"/>
          <path d="M0 25h12" stroke="#3a3a3a"/>
          <path d="M3 36l-2-4 1-1 2 2v-5h1v4-5h1v5l1-5h1v5l1-3h1v6l-2 3H4z"/>
          <path d="M1 40l7 7M8 40l-7 7M1 40h2M1 40v2M8 40H6"/><circle cx="9" cy="46" r="2"/><path d="M5 52h2"/>
          <path d="M6 56v10M1 61h10M4 58l2-2 2 2M4 64l2 2 2-2M3 59l-2 2 2 2M9 59l2 2-2 2"/><path d="M5 69h2M0 72h12" stroke="#303030"/>
          <path d="M1 75h10v9H1zM1 78h10M4 75v3M8 75v3M5 80h2v2H5z"/>
        </svg>
      </div>

      <svg class="cursor" viewBox="0 0 42 42" aria-hidden="true"><path d="M0 21.500h42" stroke="#1f1f1f"/><path d="M21.500 0v42" stroke="#999"/><path d="M20 20h3v3h-3z" fill="#000" stroke="#ccc"/></svg>
      <div class="ucs"><span>Y</span><i></i><span class="x">X</span></div>
    </div>
  </div>
  <div class="mark"></div>
</div>
</body>
</html>
```
FILE: styles.css
```css
* { box-sizing: border-box; }

body {
  margin: 0;
  background: #000;
  color: #d5d9df;
  font: 5px/7px "Noto Sans", "Noto Sans CJK SC", sans-serif;
}

svg { display: block; flex: none; width: 8px; height: 8px; }
.sprite { position: absolute; width: 0; height: 0; }
.caret { width: 3px; height: 3px; }

button, input {
  margin: 0;
  padding: 0;
  border: 0;
  background: none;
  color: inherit;
  font: inherit;
}

button { display: flex; align-items: center; flex: none; }

h1, h2 { margin: 0; font: inherit; }

ul { margin: 0; padding: 0; list-style: none; }

.app { position: relative; display: flex; flex-direction: column; height: 100vh; overflow: hidden; }

/* title bar */
.titlebar {
  display: grid;
  grid-template-columns: 278fr 322fr 229fr;
  height: 10px;
  background: #222933;
}

.quick, .account { display: flex; align-items: center; min-width: 0; }
.quick-tools { display: flex; gap: 2px; margin: 0 3px 0 3px; }
.quick .logo { margin-right: 2px; }
.quick > .caret { margin-right: 4px; }
.quick > .menu { margin: 0 4px 0 1px; }
.share { color: #6bb3e6; gap: 1px; }

.title {
  position: relative;
  display: flex;
  gap: 6px;
  padding-left: 14px;
  font-family: "DejaVu Sans", "Noto Sans CJK SC", sans-serif;
  white-space: nowrap;
}

.title::after {
  content: "";
  position: absolute;
  z-index: 2;
  left: 0;
  top: -2px;
  width: 196px;
  height: 14px;
  border: 1px solid #e4261f;
}

.play { border: 2px solid transparent; border-left-color: #dfe3e8; border-right: 0; margin: 0 4px 0 2px; }
.search { width: 76px; height: 8px; background: #454e60; padding: 0 1px; margin-right: 3px; font-style: italic; }
.search::placeholder { color: #aab1bd; }
.login { gap: 1px; margin-left: 2px; }
.spring { flex: 1; }
.account > .caret { margin: 0 3px; }
.account .apps { margin-left: 2px; }
.account .help { margin-left: 6px; }
.window { display: flex; gap: 4px; margin: 0 1px 0 5px; }
.window svg { width: 6px; height: 6px; }

/* tabs */
.tabs { display: flex; height: 10px; padding-right: 8px; background: #222933; }
.tabs a { padding: 2px 5px 1px 4px; color: #aeb4be; text-decoration: none; white-space: nowrap; }
.tabs .on { background: #3b4453; color: #eceef1; }
.tabs .latin { padding-left: 5px; font-family: "DejaVu Sans", sans-serif; }
.collapse { gap: 2px; padding: 0 9px; }
.collapse i { width: 7px; height: 4px; background: #dfe3e8; }

/* ribbon */
.ribbon { display: flex; height: 45px; background: #3b4453; border-bottom: 1px solid #323a47; }
.panel { display: flex; flex: none; flex-direction: column; border-right: 1px solid #2e3642; }
.body { display: flex; height: 34px; padding-top: 2px; }
.panel h2 { display: flex; align-items: center; justify-content: center; gap: 3px; height: 10px; color: #c3c8d0; }

.big { flex-direction: column; align-self: flex-start; width: 18px; padding-top: 1px; }
.big svg { width: 14px; height: 14px; margin-bottom: 2px; }
.big .caret { width: 3px; height: 3px; margin: 1px 0 0; }

.col, .rows { display: grid; grid-template-rows: repeat(3, 10px); align-items: center; align-content: start; }
.rows { flex: 1; row-gap: 0; }
.col button { gap: 2px; white-space: nowrap; }
.col .caret { margin-left: 3px; }

.combo { width: 100%; height: 9px; gap: 1px; padding: 0 1px; background: #4a5466; }
.combo svg { width: 7px; height: 7px; }
.combo span { flex: 1; padding-left: 3px; text-align: left; }
.combo .caret { width: 3px; height: 3px; }

.strip { display: flex; gap: 3px; padding-left: 1px; }
.strip svg { width: 7px; height: 7px; }
.strip button { gap: 2px; padding-left: 1px; }

.p-draw { width: 90px; }
.p-draw .col { margin-left: 1px; }
.p-modify { width: 99px; }
.p-modify .body { justify-content: space-between; padding-left: 3px; padding-right: 4px; }
.p-note { width: 68px; padding-left: 1px; }
.p-note .col { margin-left: 1px; }
.p-layer { width: 109px; }
.p-layer .combo svg { margin-right: 1px; }
.p-block { width: 59px; }
.p-prop { width: 106px; }
.p-prop .icons { margin-right: 2px; }
.p-prop .color svg { margin-left: 4px; }
.stroke { width: 28px; height: 1px; background: #dfe3e8; }
.thin { background: #98a0ac; }
.p-group { width: 29px; }
.p-group .big { width: 17px; }
.picked { outline: 1px solid #4f9fe0; }
.p-util { width: 33px; }
.p-util .big { width: 22px; }
.p-clip { width: 33px; }
.p-clip .big { width: 21px; }
.p-view { flex: 1; border: 0; }
.p-view .big { width: 27px; }
.p-view h2 { justify-content: flex-start; padding-left: 2px; }

/* workspace */
.work { display: flex; flex: 1; min-height: 0; }

.side { width: 32px; flex: none; background: #f0f0f0; border-right: 1px solid #38465a; color: #1b1b1b; }
.side-head { height: 11px; padding: 1px 0 0 5px; background: #343d4b; color: #d5d9df; }
.side ul { display: grid; grid-template-rows: repeat(21, minmax(0, 1fr)); height: 164px; margin-top: 1px; }
.side li { display: flex; justify-content: space-between; align-items: center; padding-left: 10px; white-space: nowrap; background: linear-gradient(#2f78a8, #2f78a8) 1px 3px / 2px 3px no-repeat; }
.side b { font-weight: 400; }

.canvas { position: relative; flex: 1; overflow: hidden; background: #000; }
.canvas-head { display: flex; align-items: center; justify-content: space-between; height: 12px; padding: 0 1px; color: #a9a9a9; font-size: 6px; }
.doc { display: flex; gap: 3px; }
.doc svg { width: 6px; height: 6px; }

/* floating toolbars */
.bar { position: absolute; display: flex; align-items: center; height: 10px; padding-left: 3px; background: linear-gradient(90deg, #6f7885 1px, #384250 1px); }
.bar svg { margin: 0 1px; }
.bar i { width: 2px; height: 8px; border-left: 1px solid #29313c; }
.bar button { align-self: flex-start; width: 5px; padding-top: 1px; }
.bar button svg { width: 4px; height: 4px; margin: 0; }
.b1 { left: 48px; top: 8px; }
.b2 { left: 53px; top: 21px; }
.b3 { left: 63px; top: 40px; }
.b4 { left: 66px; top: 96px; }
.b5 { left: 63px; top: 109px; }

/* view compass */
.compass {
  position: absolute;
  right: 1px;
  top: 15px;
  display: grid;
  grid-template: "a n b" 12px "w t e" 36px "c s d" 12px / 14px 36px 14px;
  place-items: center;
  color: #b9b9b9;
  font: 8px/10px "Noto Sans CJK SC", sans-serif;
}

.compass svg { position: absolute; left: 6px; top: 4px; width: 52px; height: 52px; }
.compass span { position: relative; }
.n { grid-area: n; }
.w { grid-area: w; }
.e { grid-area: e; }
.s { grid-area: s; }
.top { grid-area: t; position: relative; justify-content: center; width: 22px; height: 22px; border: 4px solid #b0b0b0; background: #9c9ea2; color: #4f5258; font-size: 12px; }

.ucs-name { position: absolute; right: 20px; top: 83px; width: 26px; height: 8px; padding: 0 2px; gap: 3px; border-radius: 2px; background: #8b8b99; color: #c2c2cc; }

.navbar { position: absolute; right: 0; top: 101px; width: 13px; height: 93px; border-radius: 2px; background: #4a4a4a; }
.navbar svg { width: 12px; height: 92px; }

.cursor { position: absolute; left: 323px; top: 172px; width: 42px; height: 42px; }

.ucs { position: absolute; left: 9px; bottom: -2px; display: grid; grid-template-columns: 23px auto; color: #8f8f8f; font: 8px/10px "Liberation Sans", sans-serif; }
.ucs span, .ucs i { grid-column: 1; }
.ucs i { grid-row: 2; width: 1px; height: 21px; background: #666; }
.ucs .x { grid-column: 2; grid-row: 2; align-self: end; }

/* highlight frame round the side menu */
.mark { position: absolute; left: 0; top: 73px; width: 46px; height: 182px; border: 1px solid #e4261f; }
```
